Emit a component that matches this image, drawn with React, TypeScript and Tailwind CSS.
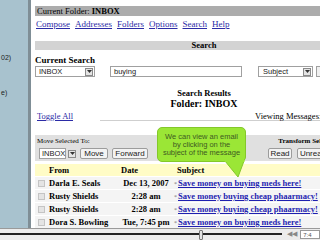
import React from 'react';

const serif = "font-['Liberation_Serif',serif]";
const sans = "font-['Liberation_Sans',Arial,sans-serif]";

const rows = [
  { from: 'Darla E. Seals', date: 'Dec 13, 2007', subject: 'Save money on buying meds here!' },
  { from: 'Rusty Shields', date: '2:28 am', subject: 'Save money buying cheap phaarmacy!' },
  { from: 'Rusty Shields', date: '2:28 am', subject: 'Save money buying cheap phaarmacy!' },
  { from: 'Dora S. Bowling', date: 'Tue, 7:45 pm', subject: 'Save money on buying meds here!' },
];

const Arrow = () => (
  <span className="w-[8px] h-[8px] bg-[#e4e4e4] border border-[#8a8a8a] flex items-center justify-center shrink-0">
    <svg width="5" height="3" viewBox="0 0 5 3">
      <path d="M0 0 L5 0 L2.5 3 Z" fill="#333" />
    </svg>
  </span>
);

const Btn = ({ label, w }: { label: string; w: string }) => (
  <span className={`${w} h-[11px] bg-[#f3f3f3] border border-[#9c9c9c] rounded-[2px] flex items-center justify-center text-[8px] text-[#222] ${sans}`}>
    {label}
  </span>
);

export default function App() {
  return (
    <div className="w-[320px] h-[240px] overflow-hidden relative flex flex-col bg-white">
      <div className="flex h-[228px] shrink-0">
        {/* left frame */}
        <div className={`w-[28px] shrink-0 bg-[#a8c2ce] ${sans} text-[7px] text-[#222] flex flex-col`}>
          <span className="mt-[53px] pl-[1px]">02)</span>
          <span className="mt-[24px] pl-[1px]">e)</span>
        </div>
        <div className="w-[3px] shrink-0 bg-[#7f8e96]" />
        <div className={`w-[338px] shrink-0 ml-[4px] flex flex-col pt-[6px] ${serif} text-black`}>
          <div className="h-[10px] bg-[#acacac] text-[8.5px] leading-[10px] pl-[2px] whitespace-nowrap">
            Current Folder: <b>INBOX</b>
          </div>
          <div className="mt-[3px] h-[10px] flex gap-[5px] pl-[1px] text-[9px] leading-[10px] text-[#2b2ba6] underline">
            <span>Compose</span>
            <span>Addresses</span>
            <span>Folders</span>
            <span>Options</span>
            <span>Search</span>
            <span>Help</span>
          </div>
          <div className="mt-[12px] h-[9px] bg-[#d3d3d3] text-[8.5px] leading-[9px] font-bold text-center">Search</div>
          <div className="mt-[5px] text-[9px] leading-[10px] font-bold">Current Search</div>
          <div className={`mt-[1px] h-[11px] flex items-center ${sans} text-[7.5px] text-[#222]`}>
            <span className="w-[60px] h-[11px] border border-[#a0a0a0] bg-white flex items-center justify-between pl-[3px] pr-[1px]">
              INBOX
              <Arrow />
            </span>
            <span className="ml-[15px] w-[132px] h-[11px] border border-[#a0a0a0] bg-white flex items-center pl-[3px]">buying</span>
            <span className="ml-[16px] w-[55px] h-[11px] border border-[#a0a0a0] bg-white flex items-center justify-between pl-[4px] pr-[1px]">
              Subject
              <Arrow />
            </span>
            <span className="ml-[3px] w-[30px] h-[11px] border border-[#a0a0a0] bg-[#f0f0f0]" />
          </div>
          <div className="mt-[11px] flex flex-col items-center font-bold">
            <span className="text-[8.5px] leading-[10px]">Search Results</span>
            <span className="text-[10px] leading-[11px]">Folder: INBOX</span>
          </div>
          <div className="mt-[2px] h-[10px] flex text-[8.5px] leading-[10px]">
            <span className="w-[65px] pl-[2px] text-[#2b2ba6] underline">Toggle All</span>
            <span className="flex-1 border-b border-[#cfcfcf] pl-[155px] whitespace-nowrap">Viewing Messages: 1 to 4 (4 total)</span>
          </div>
          <div className="mt-[14px] h-[26px] bg-[#e0e0e0] flex">
            <div className="w-[233px] flex flex-col pl-[2px]">
              <span className="text-[7px] leading-[8px] mt-[2px]">Move Selected To:</span>
              <div className="mt-[3px] flex items-center gap-[4px] pl-[2px]">
                <span className={`w-[37px] h-[11px] flex items-center justify-between ${sans} text-[7.5px] text-[#222]`}>
                  <span className="w-[27px] h-[11px] border border-[#a0a0a0] bg-white flex items-center pl-[2px]">INBOX</span>
                  <Arrow />
                </span>
                <Btn label="Move" w="w-[28px]" />
                <Btn label="Forward" w="w-[36px]" />
              </div>
            </div>
            <div className="w-[105px] flex flex-col items-center">
              <span className="text-[7px] leading-[8px] mt-[2px] font-bold whitespace-nowrap pl-[6px]">Transform Selected Messages:</span>
              <div className="mt-[3px] flex gap-[5px] self-start">
                <Btn label="Read" w="w-[24px]" />
                <Btn label="Unread" w="w-[32px]" />
                <Btn label="Delete" w="w-[32px]" />
              </div>
            </div>
          </div>
          <div className="mt-[3px] flex flex-col gap-[1px] text-[8.5px] font-bold">
            <div className="h-[12px] bg-[#fffcc6] flex items-center leading-[12px]">
              <span className="w-[12px]" />
              <span className="w-[71px] pl-[2px]">From</span>
              <span className="w-[56px] pl-[3px]">Date</span>
              <span className="pl-[3px]">Subject</span>
            </div>
            {rows.map((r, i) => (
              <div key={i} className="h-[12px] bg-[#f4f4f4] flex items-center leading-[12px] whitespace-nowrap">
                <span className="w-[12px] flex justify-center">
                  <span className="w-[7px] h-[7px] bg-[#e4e4e4] border border-[#c4c4c4]" />
                </span>
                <span className="w-[71px] pl-[2px]">{r.from}</span>
                <span className="w-[56px] text-center">{r.date}</span>
                <span className="text-[6px] text-[#777] font-normal self-start mt-[1px]">*</span>
                <span className="pl-[1px] text-[#1f1fb0] underline">{r.subject}</span>
              </div>
            ))}
          </div>
        </div>
      </div>

      {/* video player bar */}
      <div className="h-[12px] bg-[#ececec] border-t border-[#9a9a9a] relative flex items-start">
        <div className="mt-[4px] w-[285px] h-[2px] bg-[#222]" />
        <span className="absolute left-[199px] top-[1px] w-[4px] h-[10px] bg-[#e2e2e2] border border-[#777] rounded-[1px]" />
        <span className={`ml-[5px] mt-[1px] text-[7px] leading-[8px] text-[#888] ${sans}`}>◀◀</span>
        <span className={`ml-[3px] mt-[1px] w-[20px] h-[9px] bg-white border border-[#999] text-[6px] leading-[8px] pl-[2px] text-[#555] ${sans}`}>7:4</span>
      </div>

      {/* tooltip callout */}
      <div className={`absolute left-[157px] top-[127px] w-[89px] h-[35px] rounded-[5px] bg-[#9be636] border border-[#84c82a] flex flex-col items-center justify-center ${sans} text-[7.5px] leading-[8px] text-[#3e5a22]`}>
        <span>We can view an email</span>
        <span>by clicking on the</span>
        <span>subject of the message</span>
      </div>
      <svg className="absolute left-[224px] top-[160px]" width="22" height="18" viewBox="0 0 22 18">
        <path d="M1 1 L20 1 L14 17 Z" fill="#9be636" stroke="#84c82a" strokeWidth="1" />
        <path d="M0 0 L21 0 L20 2 L1 2 Z" fill="#9be636" />
      </svg>
    </div>
  );
}
